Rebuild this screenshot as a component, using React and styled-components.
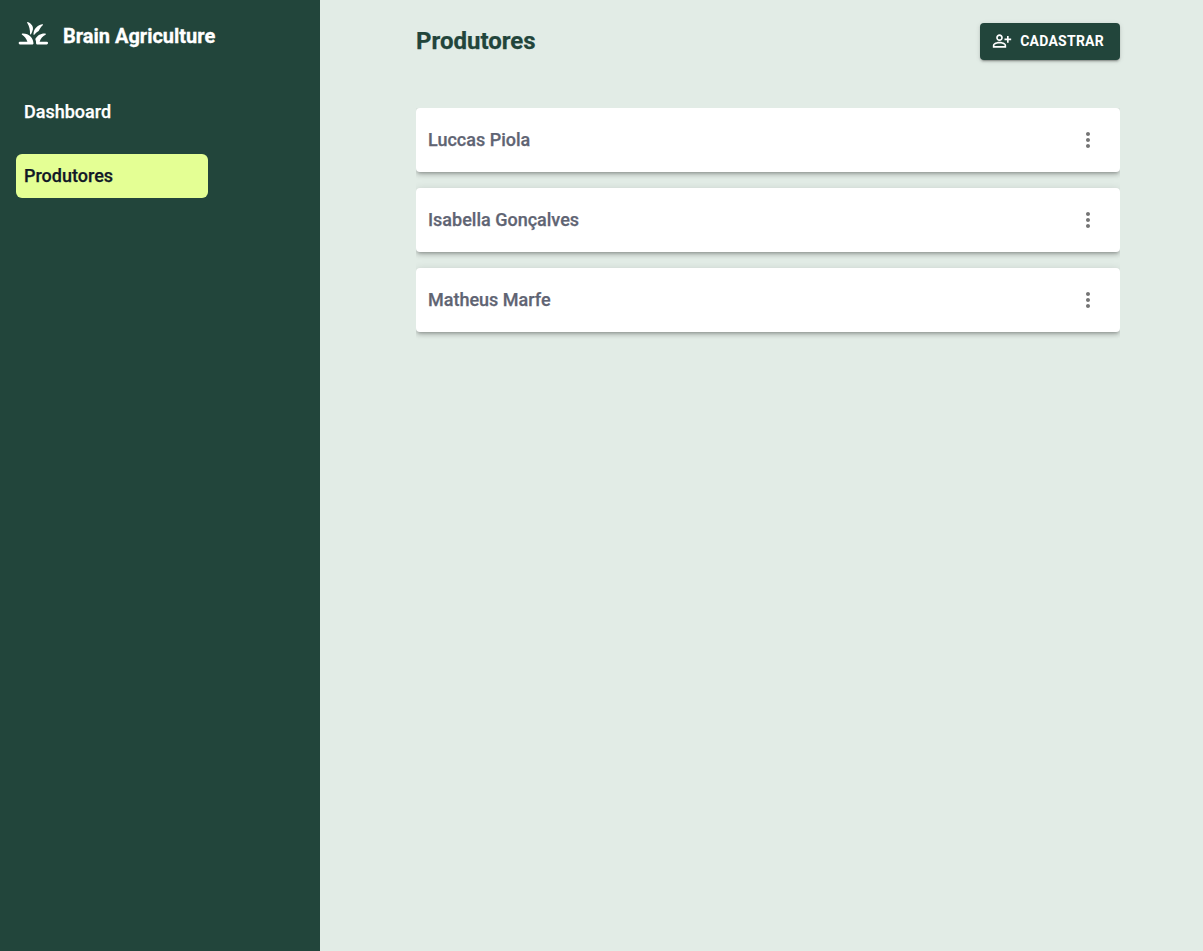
import React from "react";
import styled, { createGlobalStyle } from "styled-components";
import { MdMoreVert, MdOutlinePersonAddAlt } from "react-icons/md";

const GlobalStyle = createGlobalStyle`
  * { box-sizing: border-box; }
  body { margin: 0; font-family: Roboto, sans-serif; background: #e2ece6; }
`;

const Layout = styled.div`
  display: flex;
  min-height: 100vh;
`;

const Sidebar = styled.aside`
  width: 320px;
  flex-shrink: 0;
  padding: 16px;
  background: #22453b;
`;

const Brand = styled.div`
  display: flex;
  align-items: center;
  gap: 12px;
  height: 40px;
  color: #fff;
  font-size: 20px;
  font-weight: 700;
  -webkit-text-stroke: 0.3px currentColor;
`;

const Logo = styled.svg`
  width: 35px;
  height: 35px;
  margin-bottom: 7px;
  fill: currentColor;
  stroke: none;
`;

const Nav = styled.nav`
  display: flex;
  flex-direction: column;
  gap: 20px;
  width: 192px;
  margin-top: 34px;
`;

const NavItem = styled.a`
  display: flex;
  align-items: center;
  height: 44px;
  padding: 0 8px 2px;
  border-radius: 6px;
  font-size: 18px;
  font-weight: 500;
  -webkit-text-stroke: 0.25px currentColor;
  color: ${(p) => (p.$active ? "#111827" : "#fff")};
  background: ${(p) => (p.$active ? "#e4ff94" : "transparent")};
`;

const Main = styled.main`
  flex: 1;
  padding: 23px 83px 0 96px;
`;

const Header = styled.header`
  display: flex;
  align-items: center;
  justify-content: space-between;
  height: 37px;
  margin-bottom: 48px;
`;

const Title = styled.h1`
  margin: 0;
  padding-bottom: 2px;
  color: #22453b;
  font-size: 24px;
  font-weight: 700;
  -webkit-text-stroke: 0.25px currentColor;
`;

const Button = styled.button`
  display: flex;
  align-items: center;
  gap: 8px;
  height: 37px;
  padding: 0 16px 2px 12px;
  border: 0;
  border-radius: 4px;
  background: #22453b;
  color: #fff;
  font: 700 14px Roboto, sans-serif;
  letter-spacing: 0.25px;
  box-shadow: 0 3px 1px -2px rgba(0,0,0,.2), 0 2px 2px 0 rgba(0,0,0,.14), 0 1px 5px 0 rgba(0,0,0,.12);
`;

const List = styled.div`
  display: flex;
  flex-direction: column;
  gap: 16px;
  padding-bottom: 8px;
  overflow: hidden;
`;

const Card = styled.div`
  display: flex;
  align-items: center;
  justify-content: space-between;
  height: 64px;
  padding: 0 20px 0 12px;
  border-radius: 4px;
  background: #fff;
  box-shadow: 0 3px 3px -2px rgba(0,0,0,.2), 0 3px 4px 0 rgba(0,0,0,.14), 0 1px 8px 0 rgba(0,0,0,.12);
`;

const Name = styled.span`
  padding-bottom: 2px;
  color: #5f6473;
  font-size: 18px;
  font-weight: 500;
  -webkit-text-stroke: 0.25px currentColor;
`;

const MoreIcon = styled(MdMoreVert)`
  color: #757575;
`;

const GrassLogo = () => (
  <Logo viewBox="0 0 35 35">
    <path d="M4 29.4a1.3 1.3 0 0 1 0-2.7h7.4c-1-3.2-3.2-5.800-5.300-7a.7.7 0 0 1 .2-1.300c6.400-.4 11.200 4.300 11.200 10.200 0 .5-.3.8-.8.800z" />
    <path d="M30.700 29.400a1.300 1.300 0 0 0 0-2.700h-7.100c1-3.200 3.200-5.800 5.900-7a.7.7 0 0 0-.2-1.300c-4.700-.3-8.300 2.200-10 5.700.6 1.500.8 3 .8 4.500 0 .5.300.8.800.800z" />
    <path d="M11.300 8.100c-.4-.7.200-1.300.9-.9 3.300 1.500 5.300 4.300 4.700 7.300-.4 1.700-1.200 3.300-1.900 4.700-.3.600-.9.500-1-.1.200-4-.7-7.600-2.700-11z" />
    <path d="M26.100 9.300c.8-.2 1.200.5.600 1-1.800 1.700-3 3.600-4 5.700-1.600.7-3 2-4.200 3.600-.4.500-1 .3-1-.4.100-5 3.700-9 8.600-9.900z" />
  </Logo>
);

const producers = ["Luccas Piola", "Isabella Gonçalves", "Matheus Marfe"];

export default function App() {
  return (
    <Layout>
      <GlobalStyle />
      <Sidebar>
        <Brand>
          <GrassLogo />
          <span>Brain Agriculture</span>
        </Brand>
        <Nav>
          <NavItem>Dashboard</NavItem>
          <NavItem $active>Produtores</NavItem>
        </Nav>
      </Sidebar>
      <Main>
        <Header>
          <Title>Produtores</Title>
          <Button>
            <MdOutlinePersonAddAlt size={20} />
            CADASTRAR
          </Button>
        </Header>
        <List>
          {producers.map((name) => (
            <Card key={name}>
              <Name>{name}</Name>
              <MoreIcon size={24} />
            </Card>
          ))}
        </List>
      </Main>
    </Layout>
  );
}
